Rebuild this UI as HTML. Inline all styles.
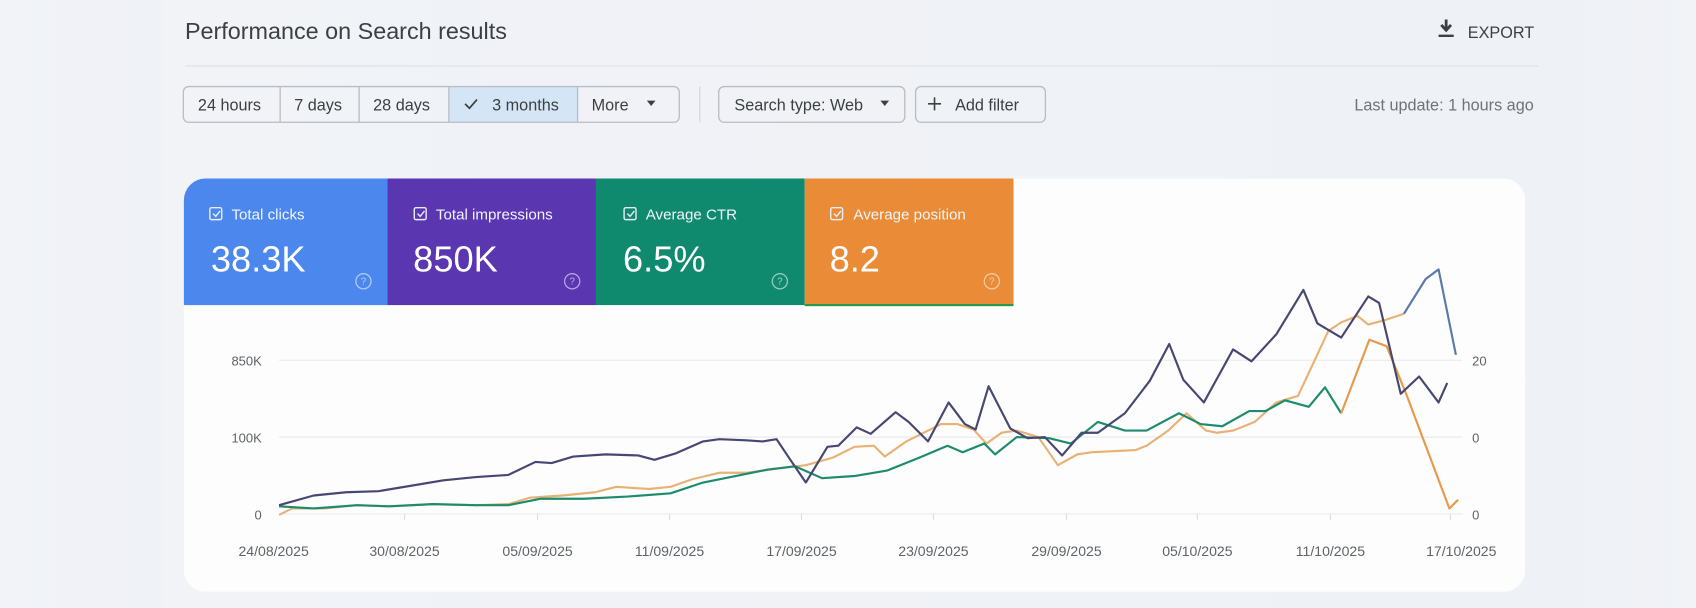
<!DOCTYPE html>
<html><head><meta charset="utf-8"><style>
html,body{margin:0;padding:0;background:#eef1f6;}
svg{display:block;font-family:"Liberation Sans",sans-serif;}
</style></head><body>
<svg width="1696" height="608" viewBox="0 0 1568 562" preserveAspectRatio="none" xmlns="http://www.w3.org/2000/svg">
<defs>
<linearGradient id="bg" x1="0" x2="1" y1="0" y2="0">
<stop offset="0" stop-color="#f1f3f8"/><stop offset="0.09" stop-color="#eff2f7"/><stop offset="0.1" stop-color="#f1f3f7"/><stop offset="0.92" stop-color="#eef1f6"/><stop offset="1" stop-color="#f1f3f7"/>
</linearGradient>
</defs>
<rect width="1568" height="562" fill="url(#bg)"/>
<text x="171" y="36" font-size="21.6" fill="#3c4043">Performance on Search results</text>
<path d="M1337 18v9M1332.5 23l4.5 5 4.5-5" stroke="#3c4043" stroke-width="2.6" fill="none"/>
<rect x="1330" y="32" width="14" height="2.2" fill="#3c4043"/>
<text x="1357" y="35" font-size="15" fill="#3c4043">EXPORT</text>
<line x1="171" y1="61" x2="1422" y2="61" stroke="#dfe2e8" stroke-width="1.2"/>
<rect x="415" y="80" width="119" height="33" fill="#d4e6f6"/>
<rect x="169.5" y="80" width="458.5" height="33" rx="5" fill="none" stroke="#b8bcc3" stroke-width="1.2"/>
<g stroke="#b8bcc3" stroke-width="1.2"><line x1="259" y1="80" x2="259" y2="113"/><line x1="332" y1="80" x2="332" y2="113"/><line x1="415" y1="80" x2="415" y2="113"/><line x1="534" y1="80" x2="534" y2="113"/></g>
<g font-size="15" fill="#3c4043">
<text x="183" y="102">24 hours</text>
<text x="272" y="102">7 days</text>
<text x="345" y="102">28 days</text>
<text x="455" y="102">3 months</text>
<text x="547" y="102">More</text>
<text x="679" y="102">Search type: Web</text>
<text x="883" y="102">Add filter</text>
</g>
<path d="M430 96l4 4 7-8" stroke="#3c4043" stroke-width="1.6" fill="none"/>
<path d="M598 93h8l-4 5z" fill="#3c4043"/>
<line x1="647" y1="80" x2="647" y2="113" stroke="#d0d3d8"/>
<rect x="664.5" y="80" width="172" height="33" rx="5" fill="none" stroke="#b8bcc3" stroke-width="1.2"/>
<path d="M814 93h8l-4 5z" fill="#3c4043"/>
<rect x="846.5" y="80" width="120" height="33" rx="5" fill="none" stroke="#b8bcc3" stroke-width="1.2"/>
<path d="M864 90v12M858 96h12" stroke="#3c4043" stroke-width="1.5"/>
<text x="1418" y="102" font-size="15" fill="#6f7378" text-anchor="end">Last update: 1 hours ago</text>
<rect x="170" y="165" width="1240" height="382" rx="20" fill="#fdfdfd"/>
<path d="M190 165H358V282H170V185A20 20 0 0 1 190 165Z" fill="#4b87ec"/>
<rect x="358" y="165" width="193" height="117" fill="#5b36b1"/>
<rect x="551" y="165" width="193" height="117" fill="#108a6e"/>
<rect x="744" y="165" width="193" height="117" fill="#e98b37"/>
<rect x="744" y="281" width="193" height="2" fill="#2a9a4a"/>
<g fill="none" stroke="#e8ecf6" stroke-width="1.3">
<rect x="194" y="192" width="11" height="11" rx="1.5"/><path d="M197 197.5l2.5 2.5 4-5"/>
<rect x="383" y="192" width="11" height="11" rx="1.5"/><path d="M386 197.5l2.5 2.5 4-5"/>
<rect x="577" y="192" width="11" height="11" rx="1.5"/><path d="M580 197.5l2.5 2.5 4-5"/>
<rect x="768" y="192" width="11" height="11" rx="1.5"/><path d="M771 197.5l2.5 2.5 4-5"/>
</g>
<g fill="#f2f4fb" font-size="14">
<text x="214" y="203">Total clicks</text>
<text x="403" y="203">Total impressions</text>
<text x="597" y="203">Average CTR</text>
<text x="789" y="203">Average position</text>
</g>
<g fill="#ffffff" font-size="33.5">
<text x="195" y="251">38.3K</text>
<text x="382" y="251">850K</text>
<text x="576" y="251">6.5%</text>
<text x="767" y="251">8.2</text>
</g>
<g fill="none" stroke="rgba(255,255,255,0.55)" stroke-width="1.2">
<circle cx="336" cy="260" r="7"/><circle cx="529" cy="260" r="7"/><circle cx="721" cy="260" r="7"/><circle cx="917" cy="260" r="7"/>
</g>
<g fill="rgba(255,255,255,0.6)" font-size="9" text-anchor="middle"><text x="336" y="263">?</text><text x="529" y="263">?</text><text x="721" y="263">?</text><text x="917" y="263">?</text></g>
<g stroke="#e8e9ec" stroke-width="1"><line x1="258" y1="333" x2="1352" y2="333"/><line x1="258" y1="404" x2="1352" y2="404"/><line x1="258" y1="475" x2="1352" y2="475"/></g>
<g stroke="#dcdde0"><line x1="374" y1="475" x2="374" y2="481"/><line x1="497" y1="475" x2="497" y2="481"/><line x1="619" y1="475" x2="619" y2="481"/><line x1="741" y1="475" x2="741" y2="481"/><line x1="863" y1="475" x2="863" y2="481"/><line x1="986" y1="475" x2="986" y2="481"/><line x1="1107" y1="475" x2="1107" y2="481"/><line x1="1230" y1="475" x2="1230" y2="481"/><line x1="1341" y1="475" x2="1341" y2="481"/></g>
<g font-size="12" fill="#5f6368">
<text x="242" y="338" text-anchor="end">850K</text>
<text x="242" y="409" text-anchor="end">100K</text>
<text x="242" y="480" text-anchor="end">0</text>
<text x="1361" y="338">20</text><text x="1361" y="409">0</text><text x="1361" y="480">0</text>
</g>
<g font-size="13" fill="#5f6368" text-anchor="middle">
<text x="253" y="514">24/08/2025</text><text x="374" y="514">30/08/2025</text><text x="497" y="514">05/09/2025</text><text x="619" y="514">11/09/2025</text><text x="741" y="514">17/09/2025</text><text x="863" y="514">23/09/2025</text><text x="986" y="514">29/09/2025</text><text x="1107" y="514">05/10/2025</text><text x="1230" y="514">11/10/2025</text><text x="1351" y="514">17/10/2025</text>
</g>
<g fill="none" stroke-width="2" stroke-linejoin="round">
<polyline stroke="#e8b277" points="258,476 270,470 300,470 330,467 360,468 400,466 440,467 470,466 490,460 520,458 550,455 570,450 600,452 620,450 640,443 665,437 690,437 720,433 745,430 770,423 790,413 808,412 818,422 838,408 858,398 870,392 885,392 900,397 912,410 926,400 940,398 960,404 978,430 996,420 1010,418 1030,417 1050,416 1060,412 1080,398 1097,382 1115,398 1125,400 1140,398 1160,390 1180,372 1200,366 1215,334 1228,306 1240,298 1255,292 1265,300 1280,296 1298,290"/>
<polyline stroke="#1e8c6c" points="258,468 290,470 330,467 360,468 400,466 440,467 470,467 500,461 540,461 580,459 620,456 650,446 680,440 710,434 735,431 760,442 790,440 820,435 850,423 876,412 890,418 910,410 920,420 940,404 970,405 990,410 1015,390 1040,398 1060,398 1090,382 1110,392 1130,394 1155,380 1170,380 1188,370 1210,376 1225,358 1240,382"/>
<polyline stroke="#e69a4c" points="1240,382 1266,314 1282,320 1300,364 1340,470 1348,462"/>
<polyline stroke="#5a7aaa" points="1298,290 1318,258 1330,249 1346,328"/>
<polyline stroke="#474773" points="258,467 290,458 320,455 350,454 380,449 410,444 440,441 470,439 495,427 510,428 530,422 560,420 590,421 605,425 625,419 650,408 665,406 690,407 705,408 718,406 730,424 745,446 765,413 775,412 792,395 805,401 828,381 840,390 858,408 877,372 892,392 902,397 914,357 934,396 950,405 966,404 982,421 1000,400 1015,400 1040,382 1063,352 1081,318 1094,351 1113,372 1140,323 1157,334 1180,309 1205,268 1218,299 1240,312 1265,274 1275,280 1295,364 1312,348 1330,372 1338,354"/>
</g>
</svg>
</body></html>
